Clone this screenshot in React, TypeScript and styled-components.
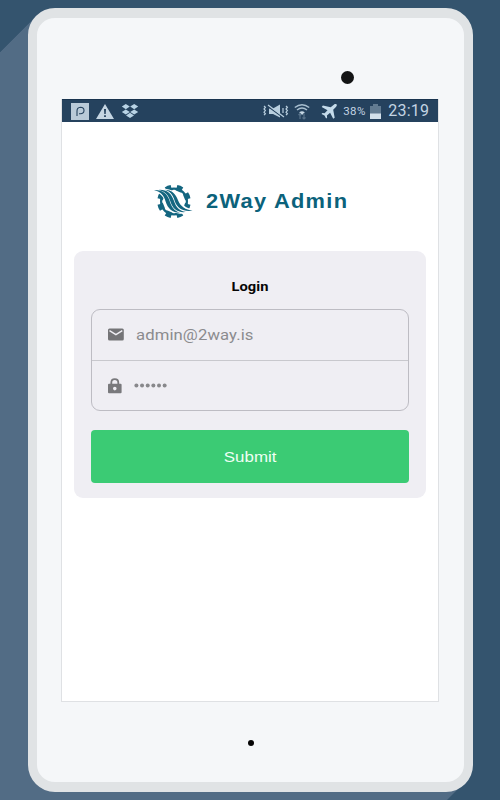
import React from 'react';
import styled, { createGlobalStyle } from 'styled-components';

const GlobalStyle = createGlobalStyle`
  * { box-sizing: border-box; }
  body { margin: 0; }
  button { font: inherit; border: 0; padding: 0; }
`;

const Backdrop = styled.main`
  width: 500px;
  height: 800px;
  padding: 8px 27px 8px 27.5px;
  overflow: hidden;
  font-family: Roboto, 'Liberation Sans', sans-serif;
  background:
    linear-gradient(135deg, #34546e 36.7px, transparent 37.3px) 0 0 / 100px 100px no-repeat,
    linear-gradient(#34546e, #34546e) 0 0 / 100% 17px no-repeat,
    linear-gradient(315deg, #34546e 37.2px, transparent 37.8px) 100% 100% / 100px 100px no-repeat,
    linear-gradient(90deg, transparent 465px, #34546e 465px) 0 0 / 100% 780px no-repeat,
    #526c85;
`;

const Device = styled.section`
  display: flex;
  flex-direction: column;
  align-items: center;
  height: 784px;
  border: solid #e0e3e5;
  border-width: 10px 9.5px;
  border-radius: 27px;
  background: #f5f7f9;
`;

const Camera = styled.div`
  width: 13px;
  height: 13px;
  margin: 52.5px 0 15.5px 193.5px;
  border-radius: 50%;
  background: #131415;
  flex-shrink: 0;
`;

const HomeDot = styled.div`
  width: 6px;
  height: 6px;
  margin: 38px 0 0 1.5px;
  border-radius: 50%;
  background: #050505;
`;

const Screen = styled.div`
  display: flex;
  flex-direction: column;
  flex-shrink: 0;
  width: 378px;
  height: 603px;
  border: 1px solid #dfe1e4;
  border-top: 0;
  background: #fff;
`;

const StatusBar = styled.header`
  display: flex;
  align-items: center;
  height: 23px;
  padding: 0 9px 0 8.5px;
  background: #25425e;
  border-top: 1px solid #19344f;
  color: #c3d4e3;
`;

const StatusIcon = styled.svg<{ $gap?: number }>`
  display: block;
  flex-shrink: 0;
  margin-right: ${({ $gap = 0 }) => $gap}px;
`;

const Spacer = styled.div`
  flex: 1;
`;

const Percent = styled.span`
  width: 27px;
  font-size: 11.5px;
  line-height: 22px;
  letter-spacing: 0.35px;
`;

const Clock = styled.time`
  width: 41px;
  font-size: 16px;
  line-height: 22px;
  letter-spacing: 0.25px;
`;

const Brand = styled.div`
  display: flex;
  align-items: center;
  height: 40px;
  margin: 59px 0 0 92px;
`;

const BrandName = styled.h1`
  margin: 0 0 0 12px;
  font: 700 20px/28px 'Liberation Sans', sans-serif;
  letter-spacing: 1.2px;
  white-space: nowrap;
  color: #0b627b;
  transform: scaleX(1.09);
  transform-origin: left;
`;

const LoginCard = styled.form`
  margin: 30px 12px 0;
  height: 247px;
  padding: 27px 17px 0 17px;
  border-radius: 9px;
  background: #efeef3;
`;

const Title = styled.h2`
  margin: 0 0 13px;
  font: 700 13px/18px Roboto, sans-serif;
  text-align: center;
  color: #060606;
  transform: scaleX(1.13);
`;

const Fields = styled.div`
  height: 102px;
  border: 1px solid #bdbcc3;
  border-radius: 9px;
`;

const Field = styled.label<{ $divided?: boolean }>`
  display: flex;
  align-items: center;
  height: ${({ $divided }) => ($divided ? 51 : 49)}px;
  padding-left: 15px;
  border-bottom: ${({ $divided }) => ($divided ? '1px solid #c8c8cd' : '0')};
`;

const Email = styled.span`
  margin-left: 10px;
  font-size: 15.5px;
  letter-spacing: 0.1px;
  color: #8b8b8e;
  transform: scaleX(1.075);
  transform-origin: left;
`;

const Password = styled.svg`
  display: block;
  margin-left: 11px;
  fill: #88888b;
`;

const Submit = styled.button`
  display: block;
  width: 100%;
  height: 53px;
  margin-top: 19px;
  padding-bottom: 1px;
  border-radius: 4px;
  background: #3bcb74;
  color: #effff4;
`;

const SubmitLabel = styled.span`
  display: inline-block;
  font: 15.5px 'Liberation Sans', sans-serif;
  transform: scaleX(1.09);
`;

const teeth = [0, 45, 90, 135, 180, 225, 270, 315];

function BrandIcon() {
  return (
    <StatusIcon width="40" height="34" viewBox="0 0 40 34">
      <circle cx="20" cy="17.5" r="12.9" fill="none" stroke="#146680" strokeWidth="2.2" />
      <g fill="#146680">
        {teeth.map((angle) => (
          <path
            key={angle}
            transform={`rotate(${angle + 22.5} 20 17.5)`}
            d="M15.5 5.6 17.2 4 16.8 1Q20 .2 23.2 1L22.8 4 24.5 5.6 22.5 6.6H17.5Z"
          />
        ))}
      </g>
      <path d="M0 5C10 3.5 20 4.5 24.5 12 28 21 31 24 39.5 25.500L37 29C25 31 17 29.500 12.500 21 10 13 7 9.500 0 7.500Z" fill="#fff" />
      <g fill="#146680">
        <path d="M0 6C8 5.500 13 9 15.500 16.500 17.500 23.500 20.500 27 26 28.800 18 28.500 13.800 24.500 11.600 17.500 9.800 10.500 6 7.700 0 6Z" />
        <path d="M5 5.900C12.500 5.500 17.400 9.300 19.900 16.800 22 23.500 25.500 26.900 32 28 23.500 29 18.500 24.500 16.400 17.500 14.400 10.500 11 7.500 5 5.900Z" />
        <path d="M11 5.800C17.500 5.800 21.500 9.500 24 16.300 26.500 22.500 31.500 26 38.500 26.700 29.800 28.200 23.200 24.500 20.800 17.300 18.800 10.500 16 7.300 11 5.800Z" />
      </g>
    </StatusIcon>
  );
}

function NotificationIcons() {
  return (
    <>
      <StatusIcon width="18" height="17" $gap={7}>
        <path fill="#b9cad8" d="M0 0h18v17H0z" />
        <path d="M6 13V8.5Q5.8 4.5 9.5 4.3 13 4.3 13 7.5 12.9 10.8 9.4 10.8H8" fill="none" stroke="#25425e" strokeWidth="1.1" />
      </StatusIcon>
      <StatusIcon width="18" height="15" $gap={7}>
        <path fill="#c5d5e2" d="m9 0 9 15H0Z" />
        <path fill="#25425e" d="M8 5h2l-.3 5H8.3ZM8.1 11.3h1.8V13H8.1Z" />
      </StatusIcon>
      <StatusIcon width="18" height="14" viewBox="0 0 18 14">
        <path fill="#b9d3e5" d="m4.8 0 4 2.6-4 2.7-4-2.7ZM13.2 0l4 2.6-4 2.7-4-2.7ZM4.8 5.4l4 2.6-4 2.6L.8 8ZM13.2 5.4l4 2.6-4 2.6-4-2.6ZM9 8.8l4 2.6L9 14l-4-2.6Z" />
      </StatusIcon>
    </>
  );
}

function SystemIcons() {
  return (
    <>
      <StatusIcon width="26" height="14" $gap={5}>
        <path fill="#b9cfdf" d="M6 4.5h4L17 .5v13L10 10H6Z" />
        <path d="m5 2.5 15 11" stroke="#25425e" strokeWidth="1.2" />
        <path d="m5 1 16 12M1 2l1.4 1.4L1 5l1.4 1.6L1 8.2l1.4 1.5L1 11.2M23 2l1.4 1.4L23 5l1.4 1.6L23 8.2l1.4 1.5L23 11.2M20 4v5" stroke="#b9cfdf" strokeWidth="1.2" fill="none" />
      </StatusIcon>
      <StatusIcon width="16" height="17" $gap={11}>
        <path d="M.8 4.5q7.2-5.7 14.4 0M3 7q5-4 10 0" stroke="#a8bfd0" strokeWidth="1.5" fill="none" />
        <path d="M5.2 9.3q2.8-2.2 5.6 0L8 12Z" fill="#c6d7e4" />
        <path d="M6 10.5V16M4.5 12 6 10.5 7.5 12M10 10.5V16m-1.5-1.5L10 16l1.5-1.5" stroke="#58728a" strokeWidth="1.2" fill="none" />
      </StatusIcon>
      <StatusIcon width="16" height="15" $gap={6}>
        <path fill="#c5dbea" d="M15.5.3q.9 1.3-.6 2.7l-2.7 2.7 1.5 8-1.5 1.1-3.1-6.1-3.2 2.8.2 2.2-1 .9-1.6-3L.5 10l.9-1 2.2.3 2.9-3.1L.7 3l1.2-1.4 7.8 1.6L12.8.7Q14.2-.6 15.5.3Z" />
      </StatusIcon>
    </>
  );
}

export default function App() {
  return (
    <Backdrop>
      <GlobalStyle />
      <Device>
        <Camera />
        <Screen>
          <StatusBar>
            <NotificationIcons />
            <Spacer />
            <SystemIcons />
            <Percent>38%</Percent>
            <StatusIcon width="11" height="15" $gap={7}>
              <path fill="#627b91" d="M3 0h5v2h3v8H0V2h3Z" />
              <path fill="#d4e1eb" d="M0 9.5h11V15H0Z" />
            </StatusIcon>
            <Clock>23:19</Clock>
          </StatusBar>
          <Brand>
            <BrandIcon />
            <BrandName>2Way Admin</BrandName>
          </Brand>
          <LoginCard>
            <Title>Login</Title>
            <Fields>
              <Field $divided>
                <StatusIcon width="19" height="14">
                  <path fill="#747477" d="M2.5 .5h12.8q1.5 0 1.5 1.5v9q0 1.5-1.5 1.5H2.5Q1 12.5 1 11V2Q1 .5 2.5 .5Z" />
                  <path d="m2.5 2.7 6.4 4 6.4-4" fill="none" stroke="#efeef3" strokeWidth="1.4" />
                </StatusIcon>
                <Email>admin@2way.is</Email>
              </Field>
              <Field>
                <StatusIcon width="16" height="16">
                  <path d="M4.3 7V4.7Q4.3 1.2 7.8 1.2t3.5 3.5V7" fill="none" stroke="#79797c" strokeWidth="1.8" />
                  <path fillRule="evenodd" fill="#79797c" d="M2 5.8h11.6q1 0 1 1v7.5q0 1-1 1H2q-1 0-1-1V6.8q0-1 1-1ZM7.8 8.8a1.8 1.8 0 1 0 0 3.6 1.8 1.8 0 0 0 0-3.6Z" />
                </StatusIcon>
                <Password width="34" height="5" role="img" aria-label="Password">
                  {[0, 1, 2, 3, 4, 5].map((dot) => (
                    <circle key={dot} cx={2.4 + dot * 5.65} cy="2.5" r="2" />
                  ))}
                </Password>
              </Field>
            </Fields>
            <Submit type="button">
              <SubmitLabel>Submit</SubmitLabel>
            </Submit>
          </LoginCard>
        </Screen>
        <HomeDot />
      </Device>
    </Backdrop>
  );
}
